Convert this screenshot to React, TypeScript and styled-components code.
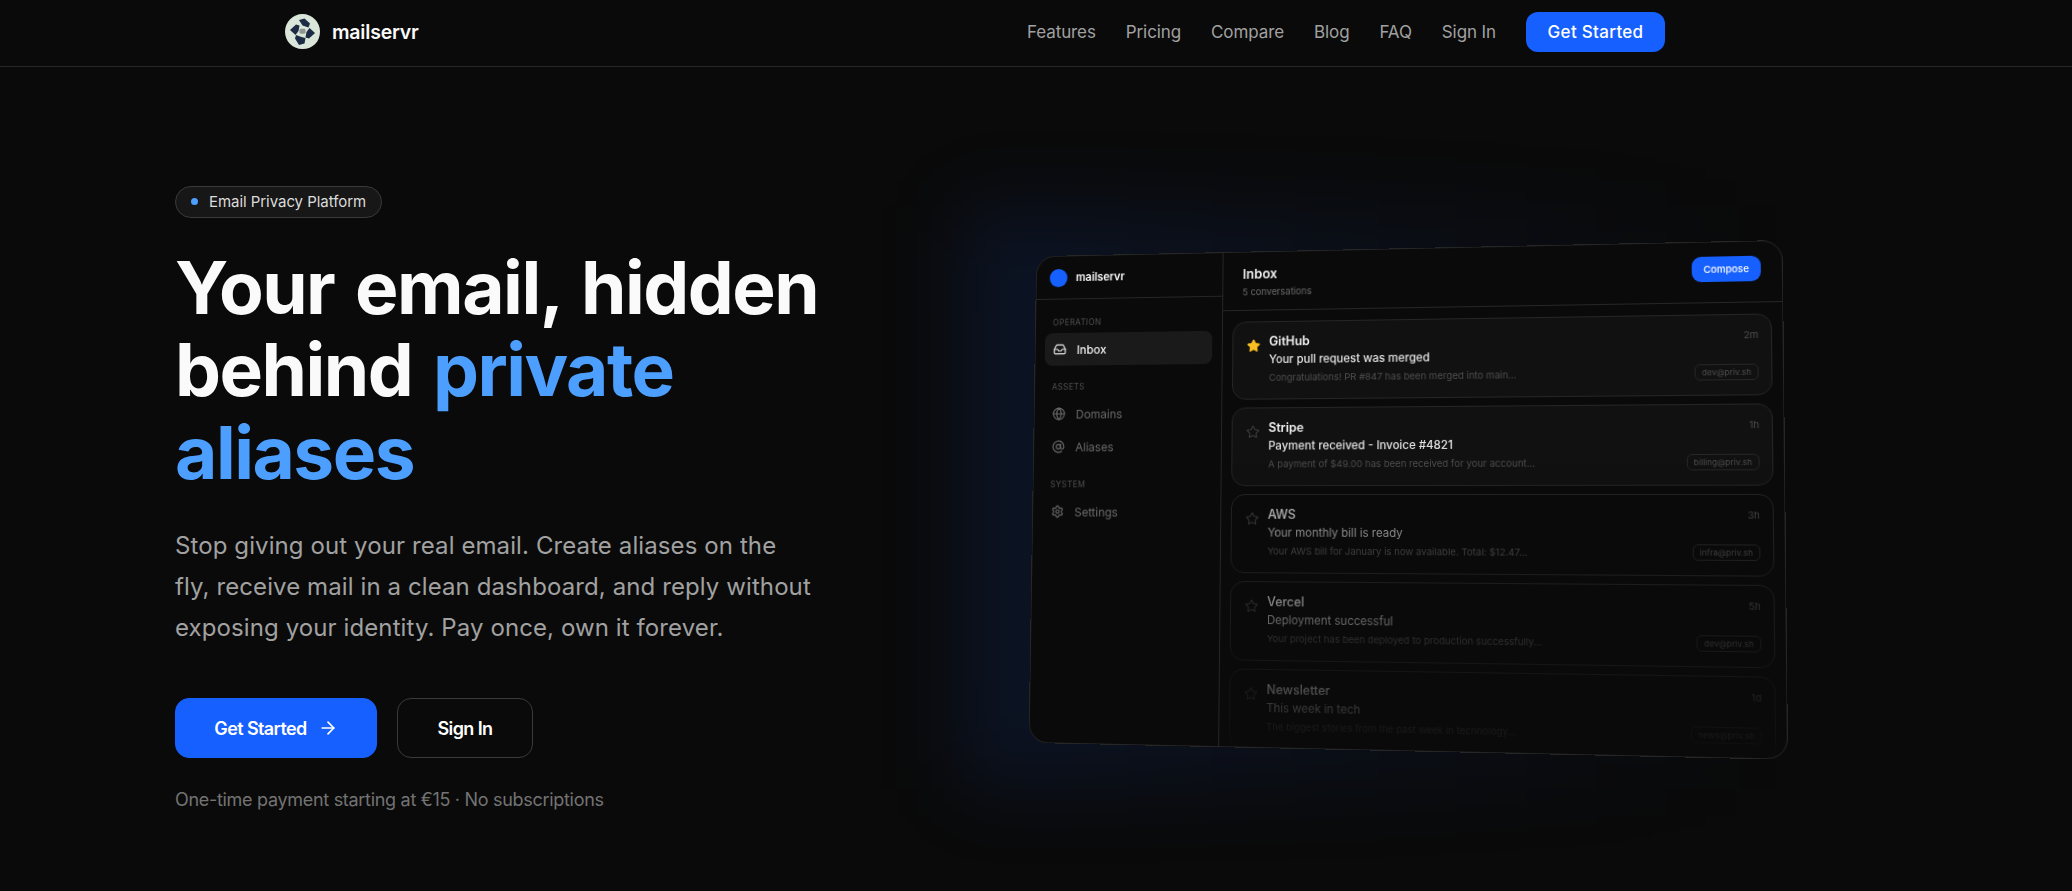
import { ArrowRight, AtSign, Globe, Inbox, Settings, Star } from 'lucide-react'
import styled, { createGlobalStyle } from 'styled-components'

const GlobalStyle = createGlobalStyle`
  html, body {
    margin: 0;
    background: #0a0a0a;
  }
  * {
    box-sizing: border-box;
  }
  body {
    font-family: Inter, "Liberation Sans", sans-serif;
    color: #fafafa;
    overflow: hidden;
  }
`

const Page = styled.div`
  width: 2072px;
  height: 891px;
  background: #0a0a0a;
  overflow: hidden;
`

const Header = styled.header`
  height: 67px;
  border-bottom: 1px solid #262626;
  padding: 0 407px 3px 285px;
  display: flex;
  align-items: center;
  justify-content: space-between;
`

const Brand = styled.div`
  display: flex;
  align-items: center;
  gap: 12px;
  font-size: 19.5px;
  font-weight: 600;
  letter-spacing: -0.2px;
`

const Nav = styled.nav`
  display: flex;
  align-items: center;
  gap: 30px;
`

const NavLink = styled.a`
  font-size: 17px;
  letter-spacing: -0.1px;
  color: #a1a1a1;
`

const NavButton = styled.a`
  height: 40px;
  width: 139px;
  display: flex;
  align-items: center;
  justify-content: center;
  border-radius: 12px;
  background: #1660ff;
  font-size: 17px;
  font-weight: 500;
  letter-spacing: 0.3px;
  color: #fff;
`

const Hero = styled.main`
  height: 824px;
  padding: 40px 298px 0 175px;
  display: grid;
  grid-template-columns: 1fr 755px;
  align-items: center;
`

const Copy = styled.div`
  display: flex;
  flex-direction: column;
  align-items: flex-start;
`

const Badge = styled.div`
  height: 32px;
  padding: 0 15px;
  display: flex;
  align-items: center;
  gap: 11px;
  border: 1px solid #3a3a3a;
  border-radius: 16px;
  background: #171717;
  font-size: 15px;
  letter-spacing: -0.05px;
  color: #dcdcdc;
`

const Dot = styled.span`
  width: 7px;
  height: 7px;
  border-radius: 50%;
  background: #4d9fff;
`

const Title = styled.h1`
  margin: 29px 0 0;
  font-size: 73px;
  line-height: 82.5px;
  font-weight: 700;
  letter-spacing: -1.5px;
  word-spacing: 5px;
  color: #fafafa;
  width: 690px;
`

const Accent = styled.span`
  color: #4d9fff;
`

const Lead = styled.p`
  margin: 31px 0 0;
  font-size: 24px;
  line-height: 41px;
  letter-spacing: 0.1px;
  white-space: nowrap;
  color: #a1a1a1;
`

const Actions = styled.div`
  margin-top: 50px;
  display: flex;
  gap: 20px;
`

const ActionButton = styled.a<{ $primary?: boolean }>`
  height: 60px;
  width: ${(p) => (p.$primary ? '202px' : '136px')};
  display: flex;
  align-items: center;
  justify-content: center;
  gap: 11px;
  border-radius: 14px;
  border: 1px solid ${(p) => (p.$primary ? '#1660ff' : '#3a3a3a')};
  background: ${(p) => (p.$primary ? '#1660ff' : 'transparent')};
  font-size: 18px;
  font-weight: 600;
  letter-spacing: -0.6px;
  color: #fff;
`

const Note = styled.p`
  margin: 30px 0 0;
  font-size: 18px;
  line-height: 24px;
  letter-spacing: -0.3px;
  color: #737373;
`

const MockStage = styled.div`
  position: relative;
  width: 755px;
  height: 503px;
  margin-top: -4px;
  perspective: 1000px;

  &::before {
    content: '';
    position: absolute;
    inset: -40px -40px -40px -60px;
    background: linear-gradient(90deg, rgba(22, 96, 255, 0.11), rgba(22, 96, 255, 0.05) 55%, transparent 95%);
    filter: blur(40px);
  }
`

const Mock = styled.div`
  position: relative;
  width: 755px;
  height: 503px;
  display: grid;
  grid-template-columns: 198px 1fr;
  background: #0a0a0a;
  border: 1px solid #262626;
  border-radius: 20px;
  overflow: hidden;
  transform: rotateY(-5deg) rotateX(2deg);
`

const Sidebar = styled.aside`
  border-right: 1px solid #262626;
`

const SideBrand = styled.div`
  height: 45px;
  padding: 0 14px;
  display: flex;
  align-items: center;
  gap: 9px;
  border-bottom: 1px solid #262626;
  font-size: 11.5px;
  font-weight: 600;
`

const BlueDot = styled.span`
  width: 19px;
  height: 19px;
  border-radius: 50%;
  background: #1660ff;
`

const SideNav = styled.div`
  padding: 12px 10px;
`

const SideLabel = styled.div`
  margin: 7px 0 6px 8px;
  font-size: 8.5px;
  letter-spacing: 0.4px;
  color: #4f4f4f;
`

const SideGroup = styled.div`
  margin-bottom: 17px;
`

const SideItem = styled.div<{ $active?: boolean }>`
  height: 34px;
  padding: 0 9px;
  display: flex;
  align-items: center;
  gap: 11px;
  border-radius: 8px;
  background: ${(p) => (p.$active ? '#1a1a1a' : 'transparent')};
  font-size: 12px;
  font-weight: ${(p) => (p.$active ? 500 : 400)};
  color: ${(p) => (p.$active ? '#f0f0f0' : '#6b6b6b')};
`

const MainPanel = styled.section`
  min-width: 0;
  display: flex;
  flex-direction: column;
`

const MainHead = styled.div`
  height: 60px;
  flex: none;
  padding: 0 20px;
  display: flex;
  align-items: center;
  justify-content: space-between;
  border-bottom: 1px solid #262626;
`

const HeadTitle = styled.div`
  font-size: 13.5px;
  font-weight: 600;
  color: #f0f0f0;
`

const HeadSub = styled.div`
  margin-top: 5px;
  font-size: 9.5px;
  color: #6b6b6b;
`

const Compose = styled.div`
  width: 66px;
  height: 25px;
  margin-top: -6px;
  display: flex;
  align-items: center;
  justify-content: center;
  border-radius: 9px;
  background: #1660ff;
  font-size: 9.5px;
  font-weight: 500;
  color: #fff;
`

const MailList = styled.div`
  flex: 1;
  min-height: 0;
  overflow: hidden;
  padding: 11px 10px;
  display: flex;
  flex-direction: column;
  gap: 8px;
  mask-image: linear-gradient(to bottom, #000 32%, rgba(0, 0, 0, 0.6) 68%, rgba(0, 0, 0, 0.12) 100%);
`

const MailCard = styled.div<{ $unread?: boolean }>`
  flex: none;
  height: 80px;
  padding: 12px 12px 10px 14px;
  display: grid;
  grid-template-columns: 14px 1fr auto;
  column-gap: 9px;
  border: 1px solid #262626;
  border-radius: 14px;
  background: ${(p) => (p.$unread ? '#111111' : 'transparent')};
`

const StarCell = styled.div`
  padding-top: 3px;
`

const MailBody = styled.div`
  min-width: 0;
  display: flex;
  flex-direction: column;
`

const Sender = styled.div<{ $unread?: boolean }>`
  font-size: 12.5px;
  line-height: 16px;
  font-weight: ${(p) => (p.$unread ? 600 : 500)};
  color: ${(p) => (p.$unread ? '#f0f0f0' : '#d0d0d0')};
`

const Subject = styled.div<{ $unread?: boolean }>`
  margin-top: 3px;
  font-size: 11.5px;
  line-height: 15px;
  font-weight: ${(p) => (p.$unread ? 500 : 400)};
  color: ${(p) => (p.$unread ? '#e4e4e4' : '#a8a8a8')};
`

const Preview = styled.div`
  margin-top: 4px;
  font-size: 9.6px;
  line-height: 14px;
  color: #4f4f4f;
`

const MailSide = styled.div`
  padding: 2px 0 4px;
  display: flex;
  flex-direction: column;
  align-items: flex-end;
  justify-content: space-between;
`

const Time = styled.div`
  font-size: 9.5px;
  color: #4f4f4f;
`

const Tag = styled.div`
  height: 16px;
  padding: 0 6px;
  display: flex;
  align-items: center;
  border: 1px solid #262626;
  border-radius: 5px;
  font-size: 8px;
  color: #4f4f4f;
`

const Logo = () => (
  <svg width="35" height="35" viewBox="0 0 35 35">
    <path d="M17.5 0C27 0 35 8 35 17.5c0 10-7 17.5-17.5 17.5S0 27 0 17.5C0 8 8 0 17.5 0z" fill="#dbe6da" />
    <path d="M14 6l5.500-1.500L25 9.500l-1.500 4-6-2z" fill="#1d2b45" />
    <path d="M24.500 14l5.500 5-6 5.500-3.500-1 1-5.500z" fill="#1d2b45" />
    <path d="M20.500 24l-1 5.500-5.500 1.500L10 24.500l1-3.500 5.500 2z" fill="#1d2b45" />
    <path d="M10.500 21L5 16l6-5.500 3.500 1-1 5.500z" fill="#1d2b45" />
    <rect x="14.500" y="14.700" width="6" height="5" rx="1.400" fill="#8d968f" />
  </svg>
)

const mails = [
  { sender: 'GitHub', subject: 'Your pull request was merged', preview: 'Congratulations! PR #847 has been merged into main...', time: '2m', tag: 'dev@priv.sh', unread: true, starred: true },
  { sender: 'Stripe', subject: 'Payment received - Invoice #4821', preview: 'A payment of $49.00 has been received for your account...', time: '1h', tag: 'billing@priv.sh', unread: true },
  { sender: 'AWS', subject: 'Your monthly bill is ready', preview: 'Your AWS bill for January is now available. Total: $12.47...', time: '3h', tag: 'infra@priv.sh' },
  { sender: 'Vercel', subject: 'Deployment successful', preview: 'Your project has been deployed to production successfully...', time: '5h', tag: 'dev@priv.sh' },
  { sender: 'Newsletter', subject: 'This week in tech', preview: 'The biggest stories from the past week in technology...', time: '1d', tag: 'news@priv.sh' },
]

export default function App() {
  return (
    <Page>
      <GlobalStyle />
      <Header>
        <Brand>
          <Logo />
          mailservr
        </Brand>
        <Nav>
          <NavLink>Features</NavLink>
          <NavLink>Pricing</NavLink>
          <NavLink>Compare</NavLink>
          <NavLink>Blog</NavLink>
          <NavLink>FAQ</NavLink>
          <NavLink>Sign In</NavLink>
          <NavButton>Get Started</NavButton>
        </Nav>
      </Header>
      <Hero>
        <Copy>
          <Badge>
            <Dot />
            Email Privacy Platform
          </Badge>
          <Title>
            Your email, hidden behind <Accent>private aliases</Accent>
          </Title>
          <Lead>
            Stop giving out your real email. Create aliases on the
            <br />
            fly, receive mail in a clean dashboard, and reply without
            <br />
            exposing your identity. Pay once, own it forever.
          </Lead>
          <Actions>
            <ActionButton $primary>
              Get Started
              <ArrowRight size={20} />
            </ActionButton>
            <ActionButton>Sign In</ActionButton>
          </Actions>
          <Note>One-time payment starting at €15 · No subscriptions</Note>
        </Copy>
        <MockStage>
          <Mock>
            <Sidebar>
              <SideBrand>
                <BlueDot />
                mailservr
              </SideBrand>
              <SideNav>
                <SideGroup>
                  <SideLabel>OPERATION</SideLabel>
                  <SideItem $active>
                    <Inbox size={14} />
                    Inbox
                  </SideItem>
                </SideGroup>
                <SideGroup>
                  <SideLabel>ASSETS</SideLabel>
                  <SideItem>
                    <Globe size={14} />
                    Domains
                  </SideItem>
                  <SideItem>
                    <AtSign size={14} />
                    Aliases
                  </SideItem>
                </SideGroup>
                <SideGroup>
                  <SideLabel>SYSTEM</SideLabel>
                  <SideItem>
                    <Settings size={14} />
                    Settings
                  </SideItem>
                </SideGroup>
              </SideNav>
            </Sidebar>
            <MainPanel>
              <MainHead>
                <div>
                  <HeadTitle>Inbox</HeadTitle>
                  <HeadSub>5 conversations</HeadSub>
                </div>
                <Compose>Compose</Compose>
              </MainHead>
              <MailList>
                {mails.map((mail) => (
                  <MailCard key={mail.sender} $unread={mail.unread}>
                    <StarCell>
                      {mail.starred ? (
                        <Star size={14} fill="#fbbf24" color="#fbbf24" />
                      ) : (
                        <Star size={14} color="#3a3a3a" />
                      )}
                    </StarCell>
                    <MailBody>
                      <Sender $unread={mail.unread}>{mail.sender}</Sender>
                      <Subject $unread={mail.unread}>{mail.subject}</Subject>
                      <Preview>{mail.preview}</Preview>
                    </MailBody>
                    <MailSide>
                      <Time>{mail.time}</Time>
                      <Tag>{mail.tag}</Tag>
                    </MailSide>
                  </MailCard>
                ))}
              </MailList>
            </MainPanel>
          </Mock>
        </MockStage>
      </Hero>
    </Page>
  )
}
